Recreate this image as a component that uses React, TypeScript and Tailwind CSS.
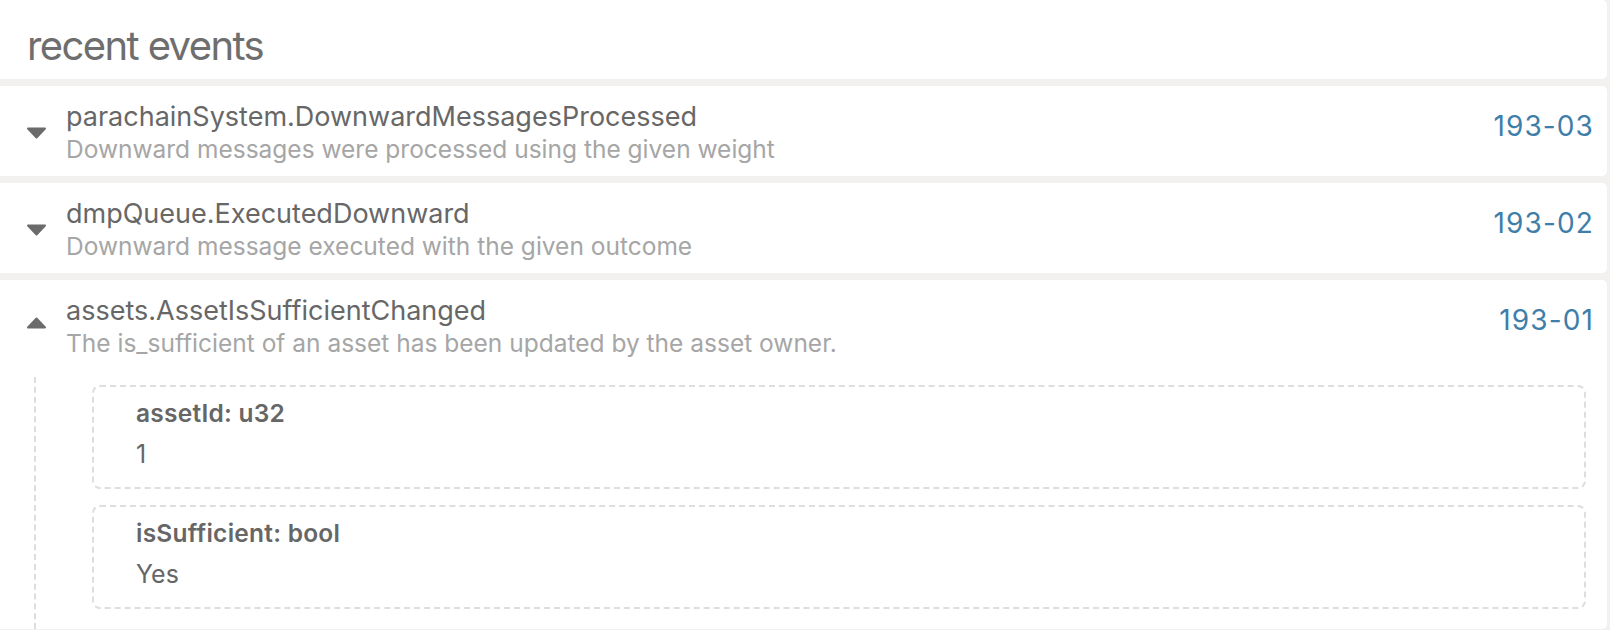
import type { ReactNode } from "react";

interface EventItem {
  id: string;
  section: string;
  method: string;
  doc: string;
  open?: boolean;
  params?: { name: string; type: string; value: string }[];
}

const EVENTS: EventItem[] = [
  {
    id: "193-03",
    section: "parachainSystem",
    method: "DownwardMessagesProcessed",
    doc: "Downward messages were processed using the given weight",
  },
  {
    id: "193-02",
    section: "dmpQueue",
    method: "ExecutedDownward",
    doc: "Downward message executed with the given outcome",
  },
  {
    id: "193-01",
    section: "assets",
    method: "AssetIsSufficientChanged",
    doc: "The is_sufficient of an asset has been updated by the asset owner.",
    open: true,
    params: [
      { name: "assetId", type: "u32", value: "1" },
      { name: "isSufficient", type: "bool", value: "Yes" },
    ],
  },
];

function Caret({ up }: { up?: boolean }) {
  return (
    <svg width="21" height="12" viewBox="0 0 21 12" className="block">
      <path
        d={up ? "M2 10.5 H19 L10.5 1.5 Z" : "M2 1.5 H19 L10.5 10.5 Z"}
        fill="#6b6b6b"
        stroke="#6b6b6b"
        strokeWidth="2"
        strokeLinejoin="round"
      />
    </svg>
  );
}

function Card({ children }: { children: ReactNode }) {
  return <div className="bg-white rounded-r-[5px]">{children}</div>;
}

function EventRow({ ev }: { ev: EventItem }) {
  return (
    <Card>
      <div className="flex h-[90px] pt-[14px]">
        <div className={`w-[66px] shrink-0 pl-[26px] ${ev.open ? "pt-[23px]" : "pt-[27px]"}`}>
          <Caret up={ev.open} />
        </div>
        <div className="flex-1 min-w-0">
          <div className="text-[27px] leading-[34px] text-[#676767]">
            {ev.section}.{ev.method}
          </div>
          <div className="text-[24.5px] leading-[30px] text-[#a6a6a6]">{ev.doc}</div>
        </div>
        <div className="shrink-0 pr-[13px] pt-[9px] text-[28px] leading-[34px] tracking-[0.04em] text-[#3f7ea8]">
          {ev.id}
        </div>
      </div>
      {ev.open && ev.params && (
        <div className="ml-[34px] mt-[7px] border-l-2 border-dashed border-[#dddddd] pt-[8px] pb-[20px] pl-[56px] pr-[21px]">
          <div className="flex flex-col gap-[16px]">
            {ev.params.map((p) => (
              <div
                key={p.name}
                className="h-[104px] rounded-[8px] border-2 border-dashed border-[#dedede] pl-[42px] pt-[11px]"
              >
                <div className="text-[24.5px] leading-[30px] font-semibold tracking-[0.01em] text-[#666666]">
                  {p.name}: {p.type}
                </div>
                <div className="mt-[8px] text-[25px] leading-[36px] text-[#666666]">{p.value}</div>
              </div>
            ))}
          </div>
        </div>
      )}
    </Card>
  );
}

export default function App() {
  return (
    <div
      className="min-h-screen bg-[#f2f1f0] pr-[3px] overflow-hidden"
      style={{ fontFamily: "Inter, 'Noto Sans', sans-serif" }}
    >
      <Card>
        <div className="h-[79px] flex items-center pl-[27px] pt-[12px]">
          <h1 className="text-[40px] leading-none text-[#6e6e6e] tracking-[-0.04em]">recent events</h1>
        </div>
      </Card>
      <div className="mt-[7px] flex flex-col gap-[7px]">
        {EVENTS.map((ev) => (
          <EventRow key={ev.id} ev={ev} />
        ))}
      </div>
    </div>
  );
}
